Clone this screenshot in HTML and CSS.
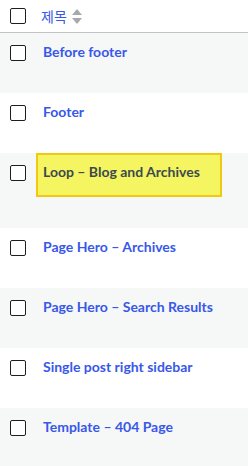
FILE: index.html
```html
<!DOCTYPE html>
<html lang="ko">
<head>
    <meta charset="UTF-8">
    <meta name="viewport" content="width=device-width, initial-scale=1.0">
    <title>Templates</title>
    <link rel="stylesheet" href="styles.css">
</head>
<body>
    <div class="list">
        <div class="head">
            <span class="check"></span>
            <a class="sort" href="#">제목
                <svg class="sort-icon" width="10" height="15" viewBox="0 0 10 15">
                    <path d="M5 0 L10 6 L0 6 Z" fill="#a7aaad"/>
                    <path d="M0 9 L10 9 L5 15 Z" fill="#a7aaad"/>
                </svg>
            </a>
        </div>
        <div class="row alt">
            <span class="check"></span>
            <a class="title" href="#">Before footer</a>
        </div>
        <div class="row">
            <span class="check"></span>
            <a class="title" href="#">Footer</a>
        </div>
        <div class="row alt tall">
            <span class="check"></span>
            <a class="title marked" href="#">Loop – Blog and Archives</a>
        </div>
        <div class="row">
            <span class="check"></span>
            <a class="title" href="#">Page Hero – Archives</a>
        </div>
        <div class="row alt">
            <span class="check"></span>
            <a class="title" href="#">Page Hero – Search Results</a>
        </div>
        <div class="row">
            <span class="check"></span>
            <a class="title" href="#">Single post right sidebar</a>
        </div>
        <div class="row alt">
            <span class="check"></span>
            <a class="title" href="#">Template – 404 Page</a>
        </div>
    </div>
</body>
</html>
```

FILE: styles.css
```css
body {
    margin: 0;
    font-family: 'Lato', 'Noto Sans CJK KR', sans-serif;
    background-color: #fff;
}
.list {
    width: 248px;
}
.head {
    display: flex;
    align-items: flex-start;
    height: 32px;
    border-bottom: 1px solid #c3c4c7;
    box-sizing: content-box;
}
.head .check {
    margin: 8px 0 0 10px;
}
.sort {
    display: flex;
    align-items: center;
    margin: 6px 0 0 15px;
    font-family: 'Noto Sans CJK KR', sans-serif;
    font-size: 14px;
    line-height: 20px;
    color: #3858e9;
    text-decoration: none;
}
.sort-icon {
    margin-left: 5px;
}
.check {
    display: block;
    flex-shrink: 0;
    width: 16px;
    height: 16px;
    box-sizing: border-box;
    border: 1px solid #1e1e1e;
    border-radius: 2px;
    background-color: #fff;
}
.row {
    display: flex;
    align-items: flex-start;
    height: 60px;
    box-sizing: border-box;
}
.row .check {
    margin: 12px 0 0 10px;
}
.row.alt {
    background-color: #f6f7f7;
}
.row.tall {
    height: 75px;
}
.title {
    margin: 9px 0 0 17px;
    font-size: 14px;
    font-weight: 700;
    line-height: 20px;
    color: #3858e9;
    text-decoration: none;
    white-space: nowrap;
}
.title.marked {
    margin: 0 0 0 10px;
    padding: 7px 20px 13px 5px;
    border: 2px solid #f2c811;
    background-color: #f5f562;
    color: #3c4a4e;
}
```
